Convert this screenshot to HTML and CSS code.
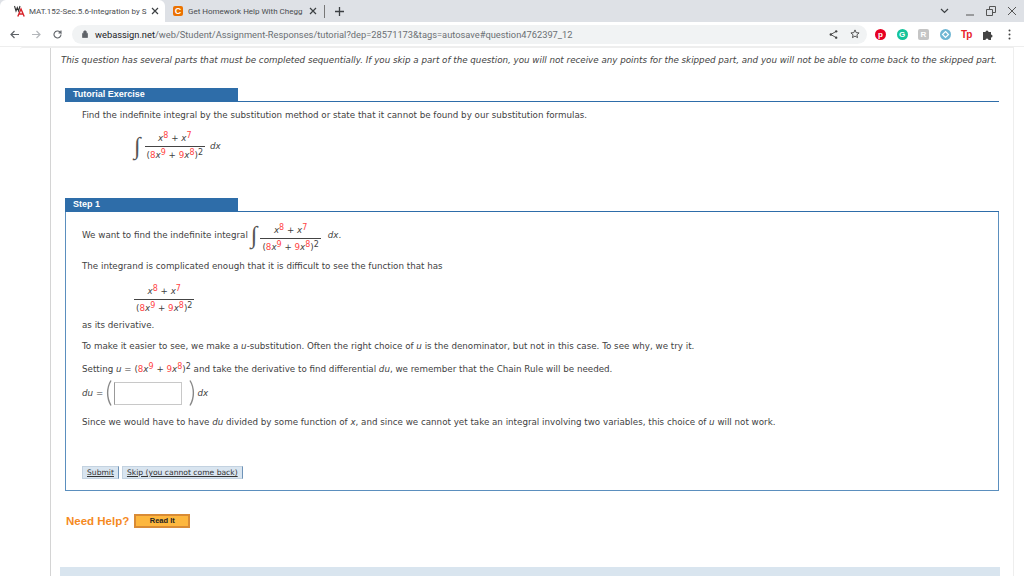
FILE: index.html
```html
<!DOCTYPE html>
<html lang="en">
<head>
<meta charset="utf-8">
<title>MAT.152-Sec.5.6-Integration</title>
<link rel="stylesheet" href="styles.css">
</head>
<body>
<div class="tabstrip">
  <div class="tab active">
    <svg class="wa-logo" width="11" height="12" viewBox="0 0 11 12"><path d="M.5 1l1.500 5L3.300 2.500 4.600 6 6 1" stroke="#333" stroke-width="1.100" fill="none"/><path d="M3.800 11.500L7 4l3.200 7.500M5 9h4" stroke="#d8232a" stroke-width="1.400" fill="none"/></svg>
    <span class="tab-title">MAT.152-Sec.5.6-Integration by S</span>
    <svg class="tab-x" width="8" height="8" viewBox="0 0 8 8"><path d="M1 1l6 6M7 1L1 7" stroke="#3c4043" stroke-width="1.200" fill="none"/></svg>
  </div>
  <div class="tab second">
    <span class="chegg">C</span>
    <span class="tab-title">Get Homework Help With Chegg</span>
    <svg class="tab-x" width="8" height="8" viewBox="0 0 8 8"><path d="M1 1l6 6M7 1L1 7" stroke="#3c4043" stroke-width="1.200" fill="none"/></svg>
  </div>
  <span class="tab-sep"></span>
  <svg class="newtab" width="11" height="11" viewBox="0 0 11 11"><path d="M5.500 1v9M1 5.500h9" stroke="#3c4043" stroke-width="1.300" fill="none"/></svg>
  <div class="winctl">
    <svg width="9" height="6" viewBox="0 0 9 6"><path d="M1 1l3.500 3.500L8 1" stroke="#3c4043" stroke-width="1.200" fill="none"/></svg>
    <svg class="w-min" width="9" height="9" viewBox="0 0 9 9"><path d="M0 8h8" stroke="#555" stroke-width="1" fill="none"/></svg>
    <svg class="w-max" width="10" height="10" viewBox="0 0 10 10"><path d="M3.500 3V.5h6v6H7M.5 3.500h6v6h-6z" stroke="#555" stroke-width="1" fill="none"/></svg>
    <svg class="w-close" width="10" height="10" viewBox="0 0 10 10"><path d="M1 1l8 8M9 1l-8 8" stroke="#555" stroke-width="1" fill="none"/></svg>
  </div>
</div>
<div class="toolbar">
  <svg width="9" height="9" viewBox="0 0 9 9"><path d="M9 4.500H1M4.500 1L1 4.500 4.500 8" stroke="#5f6368" stroke-width="1.200" fill="none"/></svg>
  <svg class="t-fwd" width="9" height="9" viewBox="0 0 9 9"><path d="M0 4.500h8M4.500 1L8 4.500 4.500 8" stroke="#b4b7bb" stroke-width="1.200" fill="none"/></svg>
  <svg class="t-rel" width="9" height="9" viewBox="0 0 9 9"><path d="M8 4.500a3.500 3.500 0 1 1-1-2.500L8 3V.5M8 3H5.500" stroke="#5f6368" stroke-width="1.100" fill="none"/></svg>
  <div class="omnibox">
    <svg class="lock" width="6" height="8" viewBox="0 0 7 9"><path d="M1 3.500h5a.7.7 0 0 1 .7.700v3.900a.7.7 0 0 1-.7.700H1a.7.7 0 0 1-.7-.7V4.200A.7.7 0 0 1 1 3.500zM1.800 3.500V2.300a1.700 1.700 0 0 1 3.400 0v1.200" fill="#5f6368" stroke="#5f6368" stroke-width=".6"/></svg>
    <span class="url"><span class="url-host">webassign.net</span>/web/Student/Assignment-Responses/tutorial?dep=28571173&amp;tags=autosave#question4762397_12</span>
    <svg class="share" width="9" height="9" viewBox="0 0 10 10"><path d="M8 1.500L2 5l6 3.500" stroke="#444" stroke-width="1" fill="none"/><circle cx="8" cy="1.500" r="1.300" fill="#444"/><circle cx="2" cy="5" r="1.300" fill="#444"/><circle cx="8" cy="8.500" r="1.300" fill="#444"/></svg>
    <svg class="star" width="10" height="10" viewBox="0 0 11 11"><path d="M5.500 1l1.300 3 3.200.3-2.400 2.100.7 3.100-2.800-1.700-2.800 1.700.7-3.100L1 4.300l3.200-.3z" stroke="#444" stroke-width="1" fill="none"/></svg>
  </div>
  <div class="exts">
    <span class="ext ext-pin">p</span>
    <span class="ext ext-gram">G</span>
    <span class="ext ext-gray">R</span>
    <svg class="ext-svg" width="11" height="11" viewBox="0 0 11 11"><circle cx="5.500" cy="5.500" r="5.500" fill="#6fb6d3"/><path d="M5.500 2.500l3 3-3 3-3-3z" fill="none" stroke="#fff" stroke-width="1.200"/></svg>
    <span class="ext-tp">Tp</span>
    <svg class="ext-puzzle" width="11" height="11" viewBox="0 0 11 11"><path d="M0 3h2.500a1.500 1.500 0 1 1 3 0H8v2.500a1.500 1.500 0 1 1 0 3V11H5.500a1.500 1.500 0 1 0-3 0H0z" fill="#444"/></svg>
    <svg class="ext-menu" width="3" height="11" viewBox="0 0 3 11"><circle cx="1.500" cy="1.500" r="1" fill="#444"/><circle cx="1.500" cy="5.500" r="1" fill="#444"/><circle cx="1.500" cy="9.500" r="1" fill="#444"/></svg>
  </div>
</div>
<div class="page">
  <div class="rail"></div>
  <main class="main">
    <p class="notice">This question has several parts that must be completed sequentially. If you skip a part of the question, you will not receive any points for the skipped part, and you will not be able to come back to the skipped part.</p>

    <section class="exercise">
      <h2 class="tag"><span>Tutorial Exercise</span></h2>
      <p class="line first">Find the indefinite integral by the substitution method or state that it cannot be found by our substitution formulas.</p>
      <div class="eq eq-main">
        <span class="int">∫</span>
        <span class="frac">
          <span class="num"><i>x</i><sup class="r">8</sup> + <i>x</i><sup class="r">7</sup></span>
          <span class="den">(<span class="r">8</span><i>x</i><sup class="r">9</sup> + <span class="r">9</span><i>x</i><sup class="r">8</sup>)<sup>2</sup></span>
        </span>
        <i class="dx">dx</i>
      </div>
    </section>

    <h2 class="tag step-tag"><span>Step 1</span></h2>
    <section class="step">
      <div class="eq-inline">
        <span>We want to find the indefinite integral</span>
        <span class="int">∫</span>
        <span class="frac frac-inline">
          <span class="num"><i>x</i><sup class="r">8</sup> + <i>x</i><sup class="r">7</sup></span>
          <span class="den">(<span class="r">8</span><i>x</i><sup class="r">9</sup> + <span class="r">9</span><i>x</i><sup class="r">8</sup>)<sup>2</sup></span>
        </span>
        <span><i>dx</i>.</span>
      </div>
      <p class="line l2">The integrand is complicated enough that it is difficult to see the function that has</p>
      <div class="eq eq-second">
        <span class="frac">
          <span class="num"><i>x</i><sup class="r">8</sup> + <i>x</i><sup class="r">7</sup></span>
          <span class="den">(<span class="r">8</span><i>x</i><sup class="r">9</sup> + <span class="r">9</span><i>x</i><sup class="r">8</sup>)<sup>2</sup></span>
        </span>
      </div>
      <p class="line l3">as its derivative.</p>
      <p class="line l4">To make it easier to see, we make a <i>u</i>-substitution. Often the right choice of <i>u</i> is the denominator, but not in this case. To see why, we try it.</p>
      <p class="line l5">Setting <i>u</i> = (<span class="r">8</span><i>x</i><sup class="r">9</sup> + <span class="r">9</span><i>x</i><sup class="r">8</sup>)<sup>2</sup> and take the derivative to find differential <i>du</i>, we remember that the Chain Rule will be needed.</p>
      <div class="answer">
        <i>du</i> <span>=</span>
        <svg class="paren-l" width="6" height="26" viewBox="0 0 6 26"><path d="M5 .5C.5 8 .5 18 5 25.500" stroke="#888" stroke-width="1.400" fill="none"/></svg>
        <span class="inputbox"></span>
        <svg class="paren-r" width="6" height="26" viewBox="0 0 6 26"><path d="M1 .5C5.500 8 5.500 18 1 25.500" stroke="#888" stroke-width="1.400" fill="none"/></svg>
        <i class="dx2">dx</i>
      </div>
      <p class="line l6">Since we would have to have <i>du</i> divided by some function of <i>x</i>, and since we cannot yet take an integral involving two variables, this choice of <i>u</i> will not work.</p>
      <div class="buttons">
        <a class="btn">Submit</a>
        <a class="btn">Skip (you cannot come back)</a>
      </div>
    </section>

    <div class="help">
      <span class="help-label">Need Help?</span>
      <a class="readit">Read It</a>
    </div>
    <div class="nextbar"></div>
  </main>
</div>
</body>
</html>
```
FILE: styles.css
```css
* { box-sizing: border-box; }
html, body { margin: 0; height: 576px; overflow: hidden; background: #fff; }
body { font-family: "DejaVu Sans", Verdana, sans-serif; font-size: 8.720px; color: #3f3f3f; }
p { margin: 0; }
.r { color: #f44; }
sup { font-size: 8px; line-height: 0; vertical-align: 3px; }

.tabstrip { height: 22px; background: #dee1e6; display: flex; align-items: flex-end; font-family: "Roboto", "Liberation Sans", sans-serif; font-size: 8px; color: #4a4d50; }
.tab { height: 22px; display: flex; align-items: center; }
.tab.active { width: 165px; padding: 0 6px 0 14px; gap: 4px; background: #fff; border-radius: 6px 6px 0 0; }
.tab.second { width: 157px; padding: 0 5px 0 8px; gap: 5px; }
.tab-title { flex: 1; white-space: nowrap; overflow: hidden; min-width: 0; }
.tab-x { flex: none; }
.wa-logo { flex: none; }
.chegg { flex: none; width: 10px; height: 10px; border-radius: 2px; background: #eb7100; color: #fff; font: bold 9px/10px "Liberation Sans", sans-serif; text-align: center; }
.tab-sep { width: 1px; height: 13px; background: #777; margin: 0 0 4px 2px; }
.newtab { margin: 0 0 5px 9px; }
.winctl { margin-left: auto; display: flex; align-items: center; height: 22px; padding-right: 7px; }
.w-min { margin-left: 17px; }
.w-max { margin-left: 11px; }
.w-close { margin-left: 11px; }

.toolbar { height: 25px; background: #fff; display: flex; align-items: center; padding: 0 10px; border-bottom: 1px solid #eee; }
.t-fwd { margin-left: 13px; }
.t-rel { margin-left: 12px; }
.omnibox { margin-left: 10px; width: 795px; height: 19px; background: #f1f3f4; border-radius: 10px; display: flex; align-items: center; padding: 0 7px 0 10px; font-family: "Roboto", "Liberation Sans", sans-serif; font-size: 9.300px; color: #6b6f73; }
.lock { margin-right: 7px; }
.url-host { color: #202124; }
.url { flex: 1; white-space: nowrap; }
.share { margin-right: 12px; }
.exts { display: flex; align-items: center; margin-left: 8px; gap: 10.500px; }
.ext { width: 11px; height: 11px; border-radius: 50%; color: #fff; font: bold 8px/11px "Liberation Sans", sans-serif; text-align: center; }
.ext-pin { background: #e60023; }
.ext-gram { background: #15c39a; }
.ext-gray { background: #c5c5c5; border-radius: 2px; }
.ext-tp { color: #e8232a; font: bold 10px/11px "Liberation Sans", sans-serif; width: 11px; letter-spacing: -.8px; }
.ext-menu { margin-left: 4px; }

.page { display: flex; height: 529px; margin: 0 10px 0 20px; border-top: 1px solid #eee; border-right: 1px solid #eee; border-top-left-radius: 3px; }
.rail { width: 31px; border-right: 1px solid #d4d4d4; flex: none; }
.main { flex: 1; padding: 0 14px 0 9px; min-width: 0; }
.notice { margin: 7px 0 0 1px; font-style: italic; color: #444; white-space: nowrap; }

.tag { margin: 0; height: 14px; border-bottom: 1px solid #2e6da9; font-size: 9px; line-height: 13px; font-weight: bold; color: #fff; font-family: "Liberation Sans", sans-serif; }
.tag span { display: block; width: 173px; height: 13px; background: #2e6da9; padding-left: 8px; }
.exercise { margin: 23px 0 0 5px; }
.first { margin: 8px 0 0 17px; }
.eq { display: flex; align-items: center; }
.eq-main { margin: 11px 0 0 69px; }
.int { font-family: "Liberation Serif", serif; font-size: 24px; line-height: 30px; color: #555; }
.frac { display: inline-flex; flex-direction: column; align-items: center; margin: 0 5px 0 4px; }
.frac-inline { margin: 6px 4px 0 0; }
.num { padding: 0 2px 2px; white-space: nowrap; line-height: 12px; }
.den { border-top: 1px solid #444; padding: 2px 2px 0; white-space: nowrap; line-height: 12px; }

.step-tag { margin: 37px 0 0 5px; }
.step { margin-left: 5px; height: 279px; border: 1px solid #5b8fbe; border-top: 0; padding-left: 16px; }
.eq-inline { display: flex; align-items: center; height: 40px; padding-top: 6px; gap: 3px; }
.l2 { margin-top: 9px; }
.eq-second { margin: 14px 0 0 52px; }
.eq-second .frac { margin: 0; }
.l3 { margin-top: 6px; }
.l4 { margin-top: 11px; }
.l5 { margin-top: 13px; }
.answer { display: flex; align-items: center; margin-top: 6px; height: 26px; }
.answer span { margin-left: 3px; }
.paren-l { margin-left: 3px; }
.answer .inputbox { width: 68px; height: 23px; border: 1px solid #c8c8c8; border-left-color: #999; background: #fff; margin: 0 7px 0 2px; }
.dx2 { margin-left: 2px; }
.l6 { margin-top: 11px; }
.buttons { display: flex; gap: 3px; margin-top: 39px; }
.btn { height: 13px; line-height: 11px; padding: 0 4px; background: #d9e5f0; border: 1px solid #c3d2e0; border-right: 1px solid #6e93b8; text-decoration: underline; color: #333; font-size: 7.600px; }

.help { display: flex; align-items: center; gap: 5px; margin: 23px 0 0 6px; }
.help-label { font: bold 11.500px "Liberation Sans", sans-serif; color: #f58a1f; }
.readit { width: 56px; height: 14px; background: #fdb73e; border: 2px solid #d98b35; font: bold 7.500px/10px "Liberation Sans", sans-serif; color: #222; text-align: center; }
.nextbar { height: 20px; margin: 39px -1px 0 0; background: #d9e5ef; }
```
